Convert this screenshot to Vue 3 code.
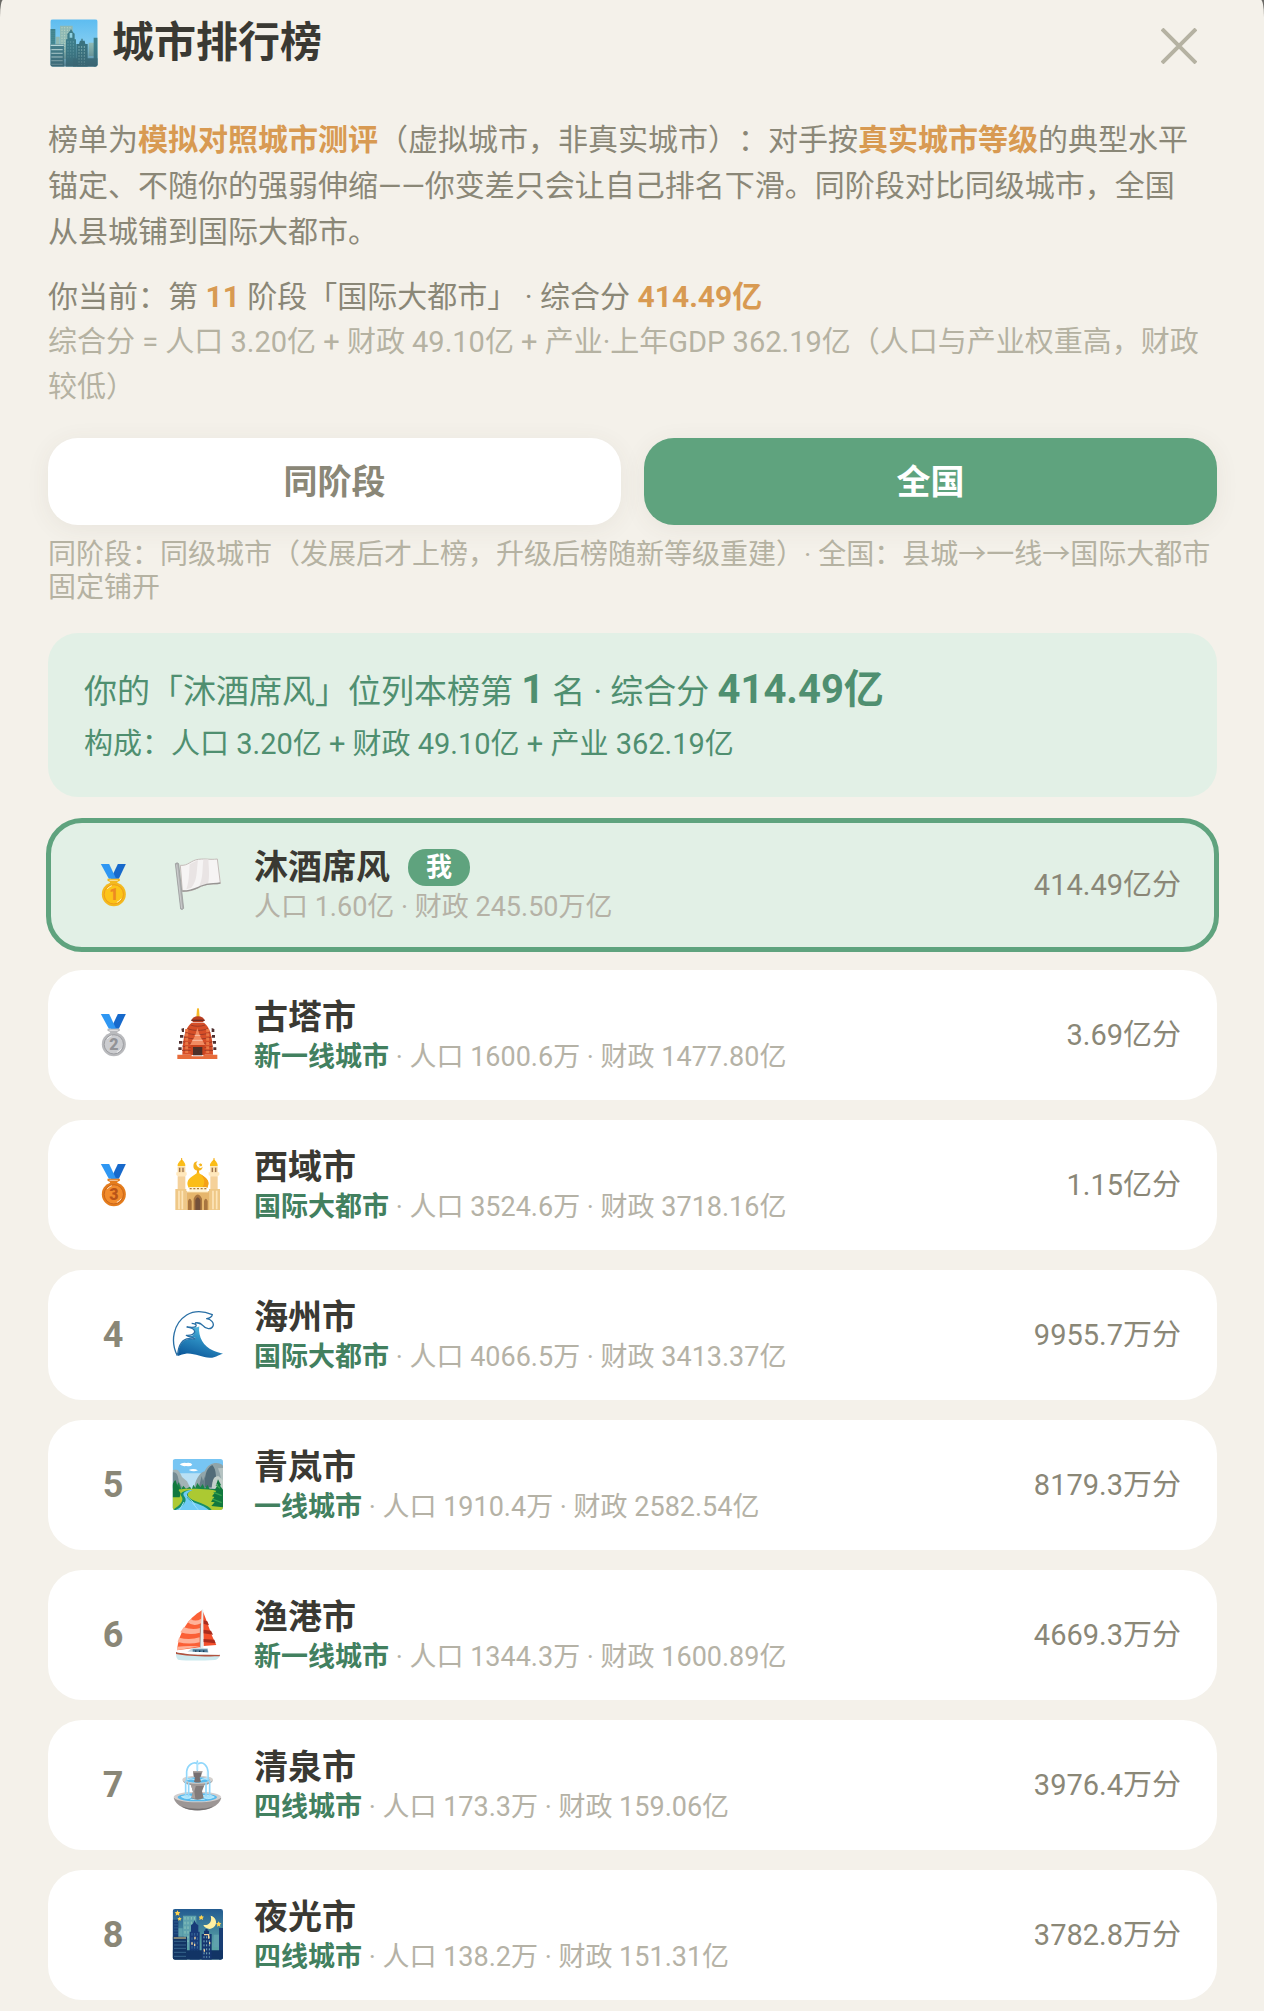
<template>
  <div class="page">
    <main class="sheet">
      <header class="header">
        <h1 class="title">
          <svg class="title-icon" viewBox="61 22 144 144" aria-hidden="true">
            <defs>
              <linearGradient id="sky-day" x1="0" y1="0" x2="0" y2="1">
                <stop offset="0" stop-color="#5dbcf0" />
                <stop offset="1" stop-color="#a5dcf2" />
              </linearGradient>
              <linearGradient id="haze-day" x1="0" y1="0" x2="0" y2="1">
                <stop offset="0.5" stop-color="#39707c" stop-opacity="0" />
                <stop offset="1" stop-color="#39606e" stop-opacity="0.8" />
              </linearGradient>
              <clipPath id="clip-day">
                <rect x="62" y="23" width="142" height="142" rx="7" />
              </clipPath>
            </defs>
            <g clip-path="url(#clip-day)">
              <rect x="62" y="23" width="142" height="142" fill="url(#sky-day)" />
              <path d="M91 42h38v100H91zM78 75h12v50H78zM177 93h16v40h-16z" fill="#8fb9b4" />
              <path d="M97 46v80M105 46v80M113 46v60M121 46v20" stroke="#b9d3c3" stroke-width="3" stroke-dasharray="4 4" />
              <path d="M62 52h15v60H62zM192 78h12v87h-12z" fill="#3c7f8b" />
              <path d="M67 57v42M73 57v42" stroke="#76aeb1" stroke-width="2" stroke-dasharray="3 3" />
              <path d="M109 165V83h4V66l5-4 6-10 6 10 5 4v17h4v82z" fill="#3d7c89" />
              <path d="M120 64h8v14h-8z" fill="#8fd0e2" />
              <path d="M115 88v50M123 88v50M131 88v50" stroke="#6aa5ac" stroke-width="2" stroke-dasharray="6 3" />
              <path d="M130 140h74v25h-74z" fill="#3c7280" />
              <path d="M140 165v-68h8l3-10h4v-6h4v6h6l2 10h7v68z" fill="#39727f" />
              <path d="M148 104v56M156 104v56M164 104v56" stroke="#a9d3cf" stroke-width="3" stroke-dasharray="4 5" />
              <path d="M62 98h41v67H62z" fill="#467f8b" />
              <path d="M62 101h40M65 114h34M65 125h34M65 136h34M65 147h34M65 158h34" stroke="#c3dfdf" stroke-width="4" />
              <rect x="62" y="23" width="142" height="142" fill="url(#haze-day)" />
            </g>
          </svg>
          城市排行榜
        </h1>
        <button class="close" type="button" aria-label="关闭">
          <svg viewBox="0 0 36 36" aria-hidden="true">
            <path d="M1 1 35 35M35 1 1 35" stroke="#b5b2a2" stroke-width="4" />
          </svg>
        </button>
      </header>

      <p class="intro">
        榜单为<b>模拟对照城市测评</b>（虚拟城市，非真实城市）：对手按<b>真实城市等级</b>的典型水平锚定、不随你的强弱伸缩——你变差只会让自己排名下滑。同阶段对比同级城市，全国从县城铺到国际大都市。
      </p>
      <p class="current">你当前：第 <b>11</b> 阶段「国际大都市」 · 综合分 <b>414.49亿</b></p>
      <p class="formula">综合分 = 人口 3.20亿 + 财政 49.10亿 + 产业·上年GDP 362.19亿（人口与产业权重高，财政较低）</p>

      <div class="tabs">
        <button
          v-for="tab in tabs"
          :key="tab"
          type="button"
          class="tab"
          :class="{ active: tab === current }"
          @click="current = tab"
        >
          {{ tab }}
        </button>
      </div>
      <p class="hint">同阶段：同级城市（发展后才上榜，升级后榜随新等级重建）· 全国：县城→一线→国际大都市固定铺开</p>

      <section class="summary">
        <p class="summary-main">你的「沐酒席风」位列本榜第 <b>1</b> 名 · 综合分 <b>414.49亿</b></p>
        <p class="summary-sub">构成：人口 3.20亿 + 财政 49.10亿 + 产业 362.19亿</p>
      </section>

      <ol class="list">
        <li v-for="(city, index) in cities" :key="city.name" class="row" :class="{ me: city.me }">
          <div class="rank">
            <svg v-if="index < 3" class="medal" viewBox="28 66 80 132" aria-hidden="true">
              <path d="M81 69h24l-21 44H60z" fill="#1769cb" />
              <path d="M30 69h25l21 44H54z" fill="#2f97f3" />
              <path d="M50 113h37v6l-8 4 3 8H55l3-8-8-4z" :fill="medals[index].rim" />
              <path d="M56 118h25" stroke="#fff" stroke-opacity="0.6" stroke-width="3" />
              <circle cx="69" cy="160" r="36" :fill="medals[index].rim" />
              <circle cx="69" cy="160" r="29" :fill="medals[index].face" :stroke="medals[index].ring" stroke-width="3" />
              <path d="M49 144a27 27 0 0 1 14-10M91 173a27 27 0 0 1-13 11" fill="none" stroke="#fff" stroke-opacity="0.7" stroke-width="3" />
              <text x="69" y="177" text-anchor="middle" font-size="48" font-weight="900" :fill="medals[index].digit">{{ index + 1 }}</text>
            </svg>
            <template v-else>{{ index + 1 }}</template>
          </div>

          <svg v-if="city.icon === 'flag'" class="icon" viewBox="243 54 162 162" aria-hidden="true">
            <path d="M271 76c24 2 31-15 54-18 26-3 32 2 57-1l9 73c-22 4-33-1-57 9-21 10-32 16-57 15z" fill="#f6f4f4" stroke="#c5bdba" stroke-width="3" />
            <path d="M299 73l25-13c-5 34-1 61-20 83l-15 5c9-25 8-50 10-75M340 59l15-1c1 25 5 49-1 75l-29 10c16-29 11-56 15-84" fill="#e9e4e4" />
            <path d="M277 153c25 1 36-6 57-15 24-10 35-5 57-9" fill="none" stroke="#969492" stroke-width="4" />
            <path d="M256 71q6-5 10 0l15 134q-4 6-9 2z" fill="#b1b2b3" stroke="#8f9091" stroke-width="2" />
            <path d="M260 74l15 131" stroke="#d8d9da" stroke-width="2" />
          </svg>

          <svg v-else-if="city.icon === 'temple'" class="icon" viewBox="243 54 162 162" aria-hidden="true">
            <path d="M321 57q3-6 6 0l2 25h-10z" fill="#f7b928" />
            <path d="M309 83q15-8 30 0l5 8-6 6h-28l-6-6z" fill="#ba3e20" />
            <path d="M304 91h40" stroke="#6e2c22" stroke-width="4" />
            <path d="M305 98h37c18 14 26 40 27 96h-92c1-55 10-82 28-96" fill="#d64e28" />
            <path d="M302 105c12 5 30 5 43 0M293 116c17 7 44 7 61 0M286 128c22 8 53 8 75 0M282 141c24 8 60 8 83 0M279 155c26 8 63 8 89 0M277 168c28 8 64 8 92 0M276 181h93" fill="none" stroke="#9c3a26" stroke-width="3" />
            <path d="M290 117v72M353 117v72" stroke="#e97745" stroke-width="9" stroke-dasharray="9 4" />
            <path d="M274 116l8-2v12h-6zM270 135h10v8h-10zM267 153h10v8h-10zM265 172h10v8h-10zM365 114l8 3v9h-8zM366 135h9v8h-9zM369 153h9v8h-9zM370 172h9v8h-9z" fill="#4f3030" />
            <path d="M322 114l8 24 15 27h-45l15-27z" fill="#f18b62" />
            <path d="M314 136h17M307 151h31" stroke="#fac0a6" stroke-width="3" />
            <path d="M302 165h42v30h-42z" fill="#c8441f" />
            <path d="M309 171h28v25h-28z" fill="#4c3029" />
            <path d="M262 194h43v5h35v-5h42v13H262z" fill="#e76c3b" />
          </svg>

          <svg v-else-if="city.icon === 'mosque'" class="icon" viewBox="243 504 162 162" aria-hidden="true">
            <path d="M323 514a14 14 0 1 0 15 16a9 9 0 1 1-15-16" fill="#f5b51d" />
            <path d="M330 519l3 3 4-1-2 4 2 4-5-1-3 3v-5l-4-2 4-2z" fill="#f5b51d" />
            <path d="M322 538h4l2 12h-8z" fill="#f2a814" />
            <path d="M296 593c-13-25 13-34 28-46 15 12 41 21 28 46z" fill="#fbbd18" />
            <path d="M332 553c20 12 29 22 20 40h-15c10-15 6-28-5-40" fill="#f4a018" />
            <path d="M263 529c-1-10 6-14 12-21 6 7 12 11 11 21zM360 529c-1-10 6-14 12-21 6 7 12 11 11 21z" fill="#fbbd18" />
            <path d="M275 503v12M372 503v12" stroke="#f5ad13" stroke-width="3" />
            <path d="M263 530h23v20h-23zM361 530h22v20h-22z" fill="#f6d8a0" />
            <path d="M269 533v14M279 533v14M367 533v14M377 533v14" stroke="#9c7250" stroke-width="4" />
            <path d="M259 547h31v8l-4 4h-22l-5-4zM356 547h32v8l-5 4h-22l-5-4z" fill="#ffe8bd" />
            <path d="M263 559h23v42h-23zM361 559h22v42h-22z" fill="#f5d19a" />
            <path d="M298 591h52v11h-52z" fill="#fff0ca" />
            <path d="M299 596h50" stroke="#a87947" stroke-width="4" stroke-dasharray="6 5" />
            <path d="M256 597h33v63h-33zM357 597h33v63h-33z" fill="#efc887" />
            <path d="M267 602v56M277 602v56M369 602v56M380 602v56" stroke="#fde5b9" stroke-width="5" />
            <path d="M289 603h68v57h-68z" fill="#e6b66c" />
            <path d="M291 605h64" stroke="#fff0cc" stroke-width="4" />
            <path d="M311 660v-34q12-25 25 0v34zM294 660v-27q5-14 11 0v27zM342 660v-27q5-14 11 0v27z" fill="#a87540" />
            <path d="M316 660v-30q7-16 15 0v30z" fill="#73503a" />
          </svg>

          <svg v-else-if="city.icon === 'wave'" class="icon" viewBox="243 54 162 162" aria-hidden="true">
            <defs>
              <linearGradient id="water" x1="0.7" y1="0" x2="0.3" y2="1">
                <stop offset="0" stop-color="#6fd3ec" />
                <stop offset="0.45" stop-color="#2f93c6" />
                <stop offset="1" stop-color="#0d599b" />
              </linearGradient>
            </defs>
            <path d="M262 197c-22-43-12-97 28-122 26-16 57-9 78 0-4 9-8 11-14 12 11 2 19 13 15 22-2 9-10 12-20 9-10-5-20-14-31-20z" fill="#fff" />
            <path d="M330 98c-9 31 4 62 29 78 14 8 25 11 40 15-16 4-20 12-39 12-25 0-48-15-73-12-11 1-17 5-24 7 3-33 14-49 34-51 10-1 16 3 20-3-9-4-18 2-22-5 12 0 15-4 19-11 2-10-8-16-17-18 16 1 25 5 31-2 3-6-5-8-12-9 6-2 10-2 14-1" fill="url(#water)" />
            <path d="M262 197c-22-43-12-97 28-122 25-15 56-10 77-1-2 9-9 11-17 12 13 2 23 12 19 22-4 12-23 9-30-1-6-7-14-10-24-8M263 194c3-31 14-47 34-48 10 0 16 3 18 0-6-7-17-2-26-10 15 1 22-2 25-10 1-9-12-14-23-15 15 1 24 3 27-3 2-5-5-8-13-8" fill="none" stroke="#296fa5" stroke-width="4" stroke-linejoin="round" />
          </svg>

          <svg v-else-if="city.icon === 'park'" class="icon" viewBox="243 504 162 162" aria-hidden="true">
            <defs>
              <clipPath id="clip-park">
                <rect x="248" y="507" width="151" height="153" rx="8" />
              </clipPath>
            </defs>
            <g clip-path="url(#clip-park)">
              <path d="M248 507h151v153H248z" fill="#77c5f3" />
              <path d="M248 550h151v50H248z" fill="#b9e0f5" />
              <path d="M269 523q9-7 20-4 15-2 18 5-5 6-19 4-12 2-19-5M296 540q14-7 28 1-13 6-28-1" fill="#fff" />
              <path d="M248 541c15-8 22 5 28 20l15 13 12 24h-55z" fill="#a2b3b5" />
              <path d="M248 547c14-2 16 13 19 28l10 18h-29z" fill="#748b93" />
              <path d="M312 595c3-22 16-48 32-51 12-30 45-29 55-17v72z" fill="#91a5a9" />
              <path d="M343 592c2-30 2-56 24-67 15 17 8 39 16 67z" fill="#526c78" />
              <path d="M384 535c9 19 9 38 15 55v-56z" fill="#b5c3c2" />
              <path d="M326 594l9-36 4 15 6-15-2 37z" fill="#657e88" />
              <path d="M365 595c2-30 9-39 21-36l13 12v30z" fill="#c3cfca" />
              <path d="M248 586l6-15 6 16 6-10 8 20 6-10 8 9 12-6 5 9 5-15 6 10 6-15 9 13 7-10 7 14 7-12 7 13h35v58H248z" fill="#188449" />
              <path d="M248 602c27-8 105-8 151 4v54H248z" fill="#acc932" />
              <path d="M302 600c-24 1-35 10-27 20 7 10-2 24-27 40h117c-9-18-52-23-66-36-10-10-6-17 7-24z" fill="#178f68" />
              <path d="M301 600c-20 4-25 11-17 21 9 12-4 28-27 39h100c-20-18-50-20-62-33-9-11-5-19 13-27z" fill="#70cbf5" />
              <path d="M289 614c2 12 23 18 25 32M282 636l-14 24M307 638l18 22" fill="none" stroke="#9bddfa" stroke-width="3" />
              <path d="M248 582l9-12 5 17 7 6-3 8 6 9-3 12h-21zM384 568l9 17-3 2 9 12v53l-35-4 10-11-11-2 10-14-7-2 13-17-6-1 11-17-5-1z" fill="#11783e" />
              <path d="M378 584l12 11M371 607l24 10M367 627l28 11" stroke="#37a34e" stroke-width="4" />
            </g>
          </svg>

          <svg v-else-if="city.icon === 'boat'" class="icon" viewBox="243 55 162 162" aria-hidden="true">
            <path d="M337 61c-45 27-71 68-76 121l69-9z" fill="#fb6036" />
            <path d="M302 88q14 10 32-1l-1 14q-22 12-40-3zM281 113q27 9 50 2l-1 14q-29 9-59-1zM267 144q32 9 62-1v15q-32 8-66-1zM261 171q34-4 68-1l-68 12z" fill="#ffb299" />
            <path d="M338 64c12 26 22 65 41 102l-38 3z" fill="#f34f2b" />
            <path d="M340 92l12 3 5 12-17-5zM340 120l23 3 6 12-29-4zM340 148l33 2 4 11-37-4z" fill="#a92c1d" />
            <path d="M335 60q3-3 5 1v117h-9z" fill="#e8eef0" />
            <path d="M331 104v70" stroke="#7c979e" stroke-width="2" />
            <path d="M288 190l18-14h47l3 15z" fill="#b9d3df" />
            <path d="M308 179h44l2 11h-46z" fill="#4d7c99" />
            <path d="M315 185h4M327 185h4M339 185h4" stroke="#12334d" stroke-width="5" />
            <path d="M258 187c30 8 66 9 132 8-3 10-8 15-15 16-50 3-88 2-111-1-7-7-6-15-6-23" fill="#cce9ee" />
            <path d="M258 187c30 8 66 9 132 8l-1 5c-60 1-103-1-131-7z" fill="#b2533f" />
            <path d="M261 185c37 5 75 4 128 8" fill="none" stroke="#fff" stroke-width="5" />
          </svg>

          <svg v-else-if="city.icon === 'fountain'" class="icon" viewBox="243 505 162 162" aria-hidden="true">
            <path d="M251 624c12 51 131 51 143 0z" fill="#9c9695" />
            <path d="M275 650c22 10 74 10 94 0-19 16-75 16-94 0" fill="#736f70" />
            <ellipse cx="322" cy="622" rx="71" ry="16" fill="#d2cece" />
            <ellipse cx="322" cy="623" rx="59" ry="12" fill="#56b9ed" />
            <path d="M274 621q19-9 34 0-16 11-34 0M333 620q22-9 40 2-20 11-40-2M301 630q20-6 43 0" fill="#a7e3fb" stroke="#d3f3ff" stroke-width="2" />
            <path d="M303 587h40l-7 18 5 20q-18 10-37 0l5-19z" fill="#827b7a" />
            <path d="M303 587h15l-5 18 3 22-12-2 5-19z" fill="#a7a09e" />
            <path d="M278 572c5 22 84 22 91 0z" fill="#9f9997" />
            <ellipse cx="323" cy="570" rx="46" ry="12" fill="#d5d1ce" />
            <ellipse cx="323" cy="571" rx="36" ry="8" fill="#56b9ed" />
            <path d="M291 570q14-6 27 2M331 572q14-9 25-1" fill="none" stroke="#b9eaff" stroke-width="4" />
            <path d="M309 544h28l-4 16-4 4 4 12q-10 5-21 0l3-12-4-4z" fill="#756f70" />
            <path d="M309 544h28v5h-28z" fill="#aaa4a0" />
            <path d="M322 542v-28M322 522c-12-7-30 4-32 24v25M325 522c14-7 27 4 29 24v25M287 575v41M296 580v38M348 580v38M359 575v41" fill="none" stroke="#91d7fb" stroke-width="5" stroke-linecap="round" />
            <path d="M323 542v-24M293 545v25M351 545v25" fill="none" stroke="#c9efff" stroke-width="2" />
          </svg>

          <svg v-else class="icon" viewBox="243 57 162 162" aria-hidden="true">
            <defs>
              <linearGradient id="sky-night" x1="0" y1="0" x2="0" y2="1">
                <stop offset="0" stop-color="#225a90" />
                <stop offset="0.7" stop-color="#5aa3a5" />
              </linearGradient>
              <clipPath id="clip-night">
                <rect x="248" y="60" width="151" height="152" rx="7" />
              </clipPath>
            </defs>
            <g clip-path="url(#clip-night)">
              <path d="M248 60h151v152H248z" fill="url(#sky-night)" />
              <path d="M279 80h40v95h-40zM264 118h14v40h-14zM371 137h18v38h-18z" fill="#5fa2ad" />
              <path d="M285 84v75M294 84v75M304 84v35M313 84v20" stroke="#8ec7bd" stroke-width="3" stroke-dasharray="8 6" />
              <path d="M248 92h17v60h-17zM387 117h12v95h-12z" fill="#183e75" />
              <path d="M255 96v40M261 96v40" stroke="#4076a0" stroke-width="2" stroke-dasharray="5 4" />
              <path d="M299 212v-84h4v-19l6-5 4-10 6 10 6 5v19h4v84z" fill="#183b79" />
              <path d="M306 132v76M314 132v76M322 132v76" stroke="#4d82ad" stroke-width="2" stroke-dasharray="8 5" />
              <path d="M248 184h151v28H248z" fill="#123465" />
              <path d="M335 212v-77h7v-10h4v-5h7v5h4v10h8v77z" fill="#15366f" />
              <path d="M342 142v64M350 142v64M358 142v64" stroke="#7aafc0" stroke-width="3" stroke-dasharray="6 6" />
              <path d="M248 143h43v69h-43z" fill="#123463" />
              <path d="M251 147h37" stroke="#f2d78c" stroke-width="3" />
              <path d="M252 157h36M252 168h36M252 178h36M252 190h36M252 202h36" stroke="#477da0" stroke-width="2" />
              <path d="M342 137h14v12M315 143v8M306 160v7M314 164v7M359 159v7M343 181v7" fill="none" stroke="#f9d69b" stroke-width="4" />
              <path d="M362 80a20 20 0 1 1-22 28c18 2 27-11 22-28" fill="#fff0a2" />
              <path d="M262 64l3 5 6 1-4 4 1 6-6-3-5 3 1-6-4-4 6-1zM269 83l2 4 4 1-3 3v4l-3-2-4 2v-4l-3-3 5-1zM334 77l2 5 6 1-4 4 1 6-5-3-6 3 1-6-3-4 6-1zM386 97l3 5 5 1-4 4 1 6-5-3-5 3 1-6-4-4 5-1z" fill="#ffd450" />
            </g>
          </svg>

          <div class="info">
            <div class="name">
              {{ city.name }}
              <span v-if="city.me" class="badge">我</span>
            </div>
            <div class="detail">
              <template v-if="city.tier"><b>{{ city.tier }}</b> · </template>人口 {{ city.people }} · 财政 {{ city.finance }}
            </div>
          </div>
          <div class="score">{{ city.score }}分</div>
        </li>
      </ol>
    </main>
  </div>
</template>

<script setup>
import { ref } from "vue";

const tabs = ["同阶段", "全国"];
const current = ref("全国");

// 金、银、铜
const medals = [
  { rim: "#f3b91f", face: "#fcc419", ring: "#ee9d1b", digit: "#ed8a22" },
  { rim: "#b9babd", face: "#cccdd0", ring: "#9d9ea2", digit: "#929397" },
  { rim: "#e47c1c", face: "#f28c2c", ring: "#c9661c", digit: "#b95418" },
];

const cities = ref([
  { name: "沐酒席风", icon: "flag", people: "1.60亿", finance: "245.50万亿", score: "414.49亿", me: true },
  { name: "古塔市", icon: "temple", tier: "新一线城市", people: "1600.6万", finance: "1477.80亿", score: "3.69亿" },
  { name: "西域市", icon: "mosque", tier: "国际大都市", people: "3524.6万", finance: "3718.16亿", score: "1.15亿" },
  { name: "海州市", icon: "wave", tier: "国际大都市", people: "4066.5万", finance: "3413.37亿", score: "9955.7万" },
  { name: "青岚市", icon: "park", tier: "一线城市", people: "1910.4万", finance: "2582.54亿", score: "8179.3万" },
  { name: "渔港市", icon: "boat", tier: "新一线城市", people: "1344.3万", finance: "1600.89亿", score: "4669.3万" },
  { name: "清泉市", icon: "fountain", tier: "四线城市", people: "173.3万", finance: "159.06亿", score: "3976.4万" },
  { name: "夜光市", icon: "night", tier: "四线城市", people: "138.2万", finance: "151.31亿", score: "3782.8万" },
]);
</script>

<style>
body {
  background: #6b6a66;
}
</style>

<style scoped>
.page {
  font-family: Roboto, "Noto Sans CJK SC", sans-serif;
  text-spacing-trim: space-all;
  color: #8a8777;
}

.sheet {
  box-sizing: border-box;
  min-height: 100vh;
  padding: 16px 47px 11px 48px;
  background: #f4f1ea;
  border-radius: 3px 3px 0 0 / 17px 17px 0 0;
}

p,
h1,
ol {
  margin: 0;
  padding: 0;
}

.header {
  display: flex;
  justify-content: space-between;
  align-items: center;
  height: 60px;
  margin-bottom: 41px;
  padding-right: 20px;
}

.title {
  display: flex;
  align-items: center;
  gap: 14px;
  align-self: flex-start;
  font-size: 42px;
  line-height: 54px;
  font-weight: 700;
  color: #3a3933;
}

.title-icon {
  width: 48px;
  height: 48px;
  margin-left: 2px;
}

.close {
  width: 36px;
  height: 36px;
  padding: 0;
  border: none;
  background: none;
  cursor: pointer;
}

.close svg {
  display: block;
}

.intro {
  padding-right: 20px;
  font-size: 30px;
  line-height: 46px;
}

.intro b,
.current b {
  color: #d89a52;
}

.current {
  margin-top: 19px;
  font-size: 30px;
  line-height: 46px;
}

.formula {
  font-size: 29px;
  line-height: 45px;
  color: #b5b2a2;
}

.tabs {
  display: grid;
  grid-template-columns: 1fr 1fr;
  gap: 23px;
  margin-top: 28px;
}

.tab {
  height: 87px;
  padding: 0 0 4px;
  border: none;
  border-radius: 30px;
  background: #fff;
  box-shadow: 0 4px 24px rgba(80, 70, 50, 0.07);
  font-family: inherit;
  font-size: 34px;
  font-weight: 700;
  color: #8a8777;
  cursor: pointer;
}

.tab.active {
  background: #5fa37e;
  color: #fff;
}

.hint {
  margin-top: 13px;
  font-size: 28px;
  line-height: 33px;
  color: #b5b2a2;
}

.summary {
  margin-top: 29px;
  padding: 31px 36px 29px;
  border-radius: 30px;
  background: #e2f0e6;
  color: #4f8f70;
}

.summary-main {
  font-size: 33px;
  line-height: 56px;
}

.summary-main b {
  font-size: 40px;
  line-height: 40px;
}

.summary-sub {
  font-size: 29px;
  line-height: 48px;
}

.list {
  display: flex;
  flex-direction: column;
  gap: 20px;
  margin-top: 23px;
  list-style: none;
}

.row {
  display: flex;
  align-items: center;
  gap: 29px;
  box-sizing: border-box;
  height: 130px;
  padding: 0 36px;
  border-radius: 34px;
  background: #fff;
}

.row.me {
  background: #e2f0e6;
  outline: 5px solid #5fa37e;
  outline-offset: -3px;
}

.rank {
  display: flex;
  justify-content: center;
  width: 58px;
  font-size: 36px;
  line-height: 46px;
  font-weight: 700;
}

.medal {
  width: 27px;
  height: 44px;
}

.icon {
  flex: none;
  width: 54px;
  height: 54px;
}

.info {
  flex: 1;
  padding-top: 4px;
}

.name {
  display: flex;
  align-items: center;
  gap: 18px;
  height: 40px;
  font-size: 34px;
  line-height: 40px;
  font-weight: 700;
  color: #3a3933;
}

.badge {
  padding: 0 18px;
  border-radius: 18px;
  background: #5fa37e;
  font-size: 26px;
  line-height: 37px;
  color: #fff;
}

.detail {
  font-size: 27px;
  line-height: 40px;
  color: #b5b2a6;
}

.detail b {
  color: #42805f;
}

.score {
  font-size: 29px;
  line-height: 40px;
}
</style>
